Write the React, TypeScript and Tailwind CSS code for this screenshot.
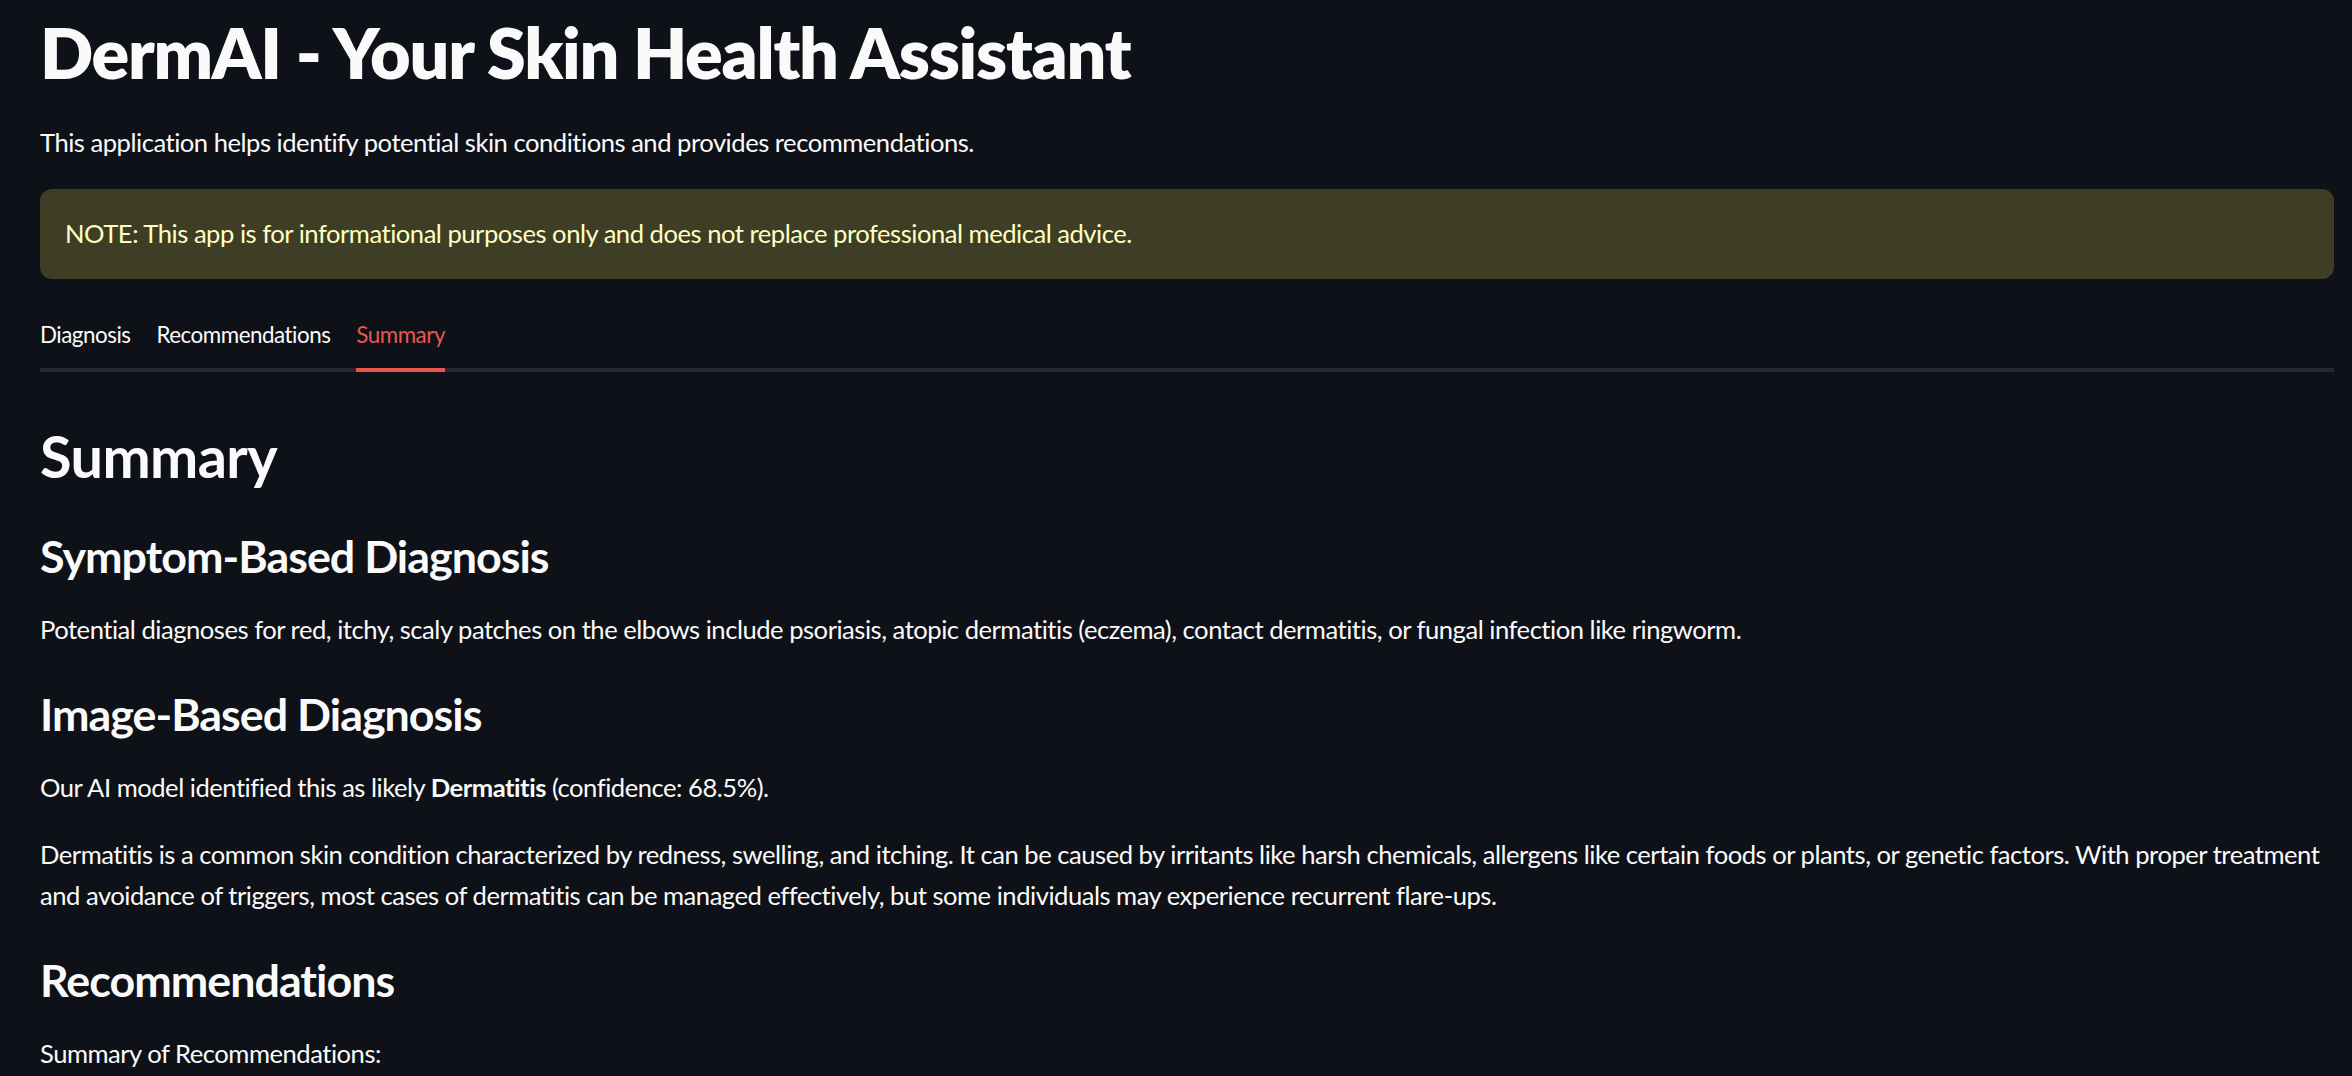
import React from "react";

const body = "text-[25.6px] leading-[41px] tracking-[-0.019em]";
const h3 = "text-[44.8px] leading-[54px] font-bold tracking-[-0.022em]";
const tab = "h-[66px] flex items-center text-[22.4px] leading-[36px] tracking-[-0.022em] -mb-[4px] border-b-[4px] box-content";

export default function App() {
  return (
    <div
      className="min-h-screen w-full bg-[#0e1117] text-[#fafafa] pl-[40px] pr-[18px] overflow-hidden"
      style={{ fontFamily: "Lato, 'Noto Sans', sans-serif" }}
    >
      <div className="h-[1076px] flex flex-col">
        <h1 className="mt-[10px] text-[70px] leading-[84px] font-extrabold tracking-[-0.018em]">
          DermAI - Your Skin Health Assistant
        </h1>
        <p className={`mt-[27.6px] ${body}`}>
          This application helps identify potential skin conditions and provides recommendations.
        </p>
        <div className="mt-[26.4px] h-[90px] rounded-[12px] bg-[#3e3d26] flex items-center px-[25px]">
          <p className={`${body} text-[#ffffc2]`}>
            NOTE: This app is for informational purposes only and does not replace professional medical advice.
          </p>
        </div>
        <div className="mt-[23px] flex gap-[26px] border-b-[4px] border-[#262730]">
          <div className={`${tab} border-transparent`}>Diagnosis</div>
          <div className={`${tab} border-transparent`}>Recommendations</div>
          <div className={`${tab} border-[#e8574f] text-[#e8574f]`}>Summary</div>
        </div>
        <h2 className="mt-[49px] text-[57.6px] leading-[69px] font-bold tracking-[-0.01em]">Summary</h2>
        <h3 className={`mt-[38.8px] ${h3}`}>Symptom-Based Diagnosis</h3>
        <p className={`mt-[26px] ${body}`}>
          Potential diagnoses for red, itchy, scaly patches on the elbows include psoriasis, atopic dermatitis (eczema), contact dermatitis, or fungal infection like ringworm.
        </p>
        <h3 className={`mt-[37.2px] ${h3}`}>Image-Based Diagnosis</h3>
        <p className={`mt-[26px] ${body}`}>
          Our AI model identified this as likely <strong className="font-bold">Dermatitis</strong> (confidence: 68.5%).
        </p>
        <p className={`mt-[26px] ${body}`}>
          Dermatitis is a common skin condition characterized by redness, swelling, and itching. It can be caused by irritants like harsh chemicals, allergens like certain foods or plants, or genetic factors. With proper treatment and avoidance of triggers, most cases of dermatitis can be managed effectively, but some individuals may experience recurrent flare-ups.
        </p>
        <h3 className={`mt-[37.2px] ${h3}`}>Recommendations</h3>
        <p className={`mt-[26px] ${body}`}>Summary of Recommendations:</p>
      </div>
    </div>
  );
}
